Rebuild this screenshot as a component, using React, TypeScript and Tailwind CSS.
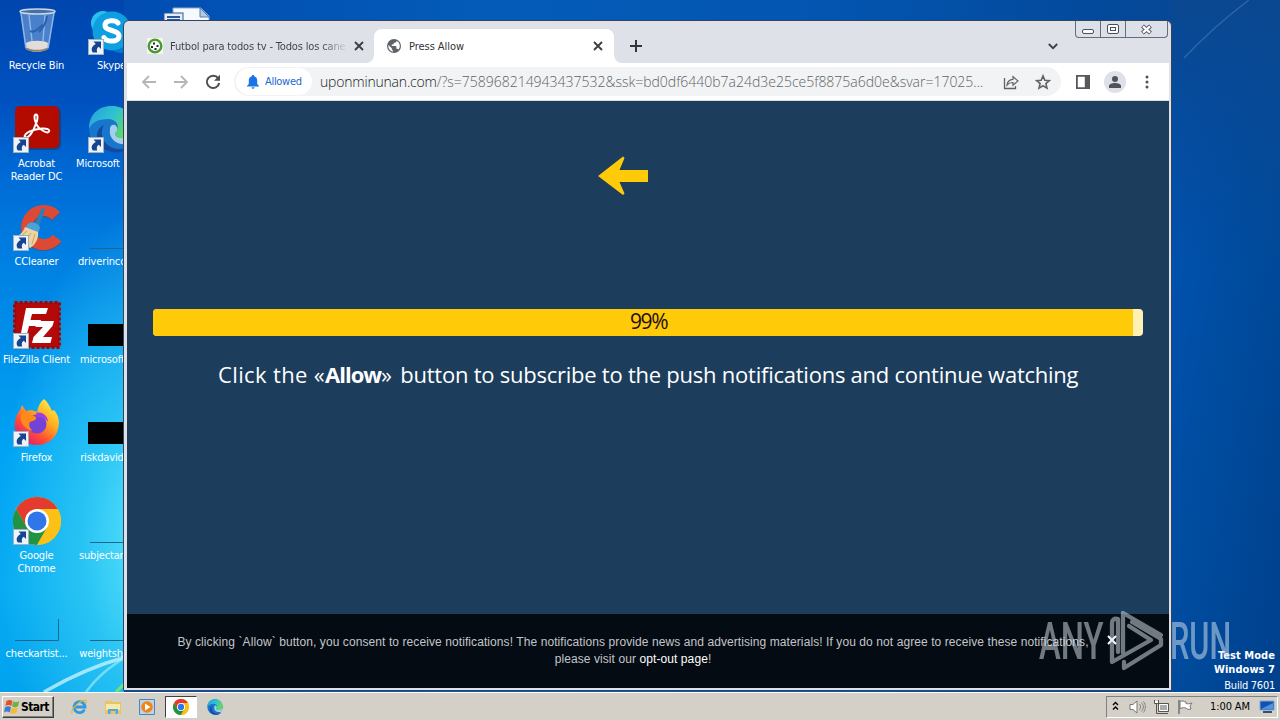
import React from "react";

const tahoma = "font-['DejaVu_Sans_Condensed','DejaVu_Sans',sans-serif]";
const trebuchet = "font-['Open_Sans','Noto_Sans',sans-serif]";

function Shortcut() {
  return (
    <svg className="absolute left-0 bottom-0" width="16" height="16" viewBox="0 0 16 16">
      <rect x="0.5" y="0.5" width="15" height="15" fill="#eef3f8" stroke="#9db0c4" />
      <path d="M5.500 2.500h7.500V10L10.800 7.800C8.700 9 8.400 10.800 9.200 13.500H4.800C2.500 10 4 7 7.800 5z" fill="#17448f" />
    </svg>
  );
}

function RecycleBin() {
  return (
    <svg width="48" height="48" viewBox="0 0 48 48">
      <path d="M7 4l5 37c1 5 22 5 24 0l6-37z" fill="#7ba7dc" fillOpacity="0.6" />
      <path d="M8 6l5 35M41 6l-6 35M16 8l3 26M32 8l-2 26" stroke="#c4dcf4" strokeOpacity="0.6" strokeWidth="1.4" />
      <path d="M17 24c5 3 9-4 13-6M34 9c-1 8-4 12-8 16" stroke="#2861ae" strokeWidth="2" fill="none" />
      <ellipse cx="24.500" cy="4.500" rx="17.500" ry="2.500" fill="#486fa6" stroke="#c9d7e6" strokeWidth="1.5" />
      <path d="M13 36c4-3 18-3 22 0l-.5 5c-3 5-18 5-21 0z" fill="#e2ddda" />
      <path d="M14 41.500c4 3 16 3 20 0" stroke="#94816f" strokeWidth="2" fill="none" />
    </svg>
  );
}

function SkypeIcon() {
  return (
    <svg width="48" height="48" viewBox="0 0 48 48">
      <circle cx="15" cy="16" r="12" fill="#29c0ee" />
      <circle cx="33" cy="33" r="13" fill="#0078d4" />
      <circle cx="24" cy="24" r="19.500" fill="#0d9fdf" />
      <path d="M30 16c-2-3-13-4-13 2.500 0 6 14 4 14 10.500 0 7-13 6-15 1.500" stroke="#fff" strokeWidth="5" fill="none" strokeLinecap="round" />
    </svg>
  );
}

function AcrobatIcon() {
  return (
    <svg width="48" height="48" viewBox="0 0 48 48">
      <rect x="3" y="2" width="45" height="43" rx="6" fill="#3a2330" opacity="0.5" />
      <rect x="2" y="1" width="44" height="42" rx="5" fill="#b30b00" />
      <path d="M12 32c-2-4 9-8 17-8.500 5-.3 8 1 7 3-2 3-11-3-13-8-2-5-2-9 0-9s2 5 0 9c-2 6-7 16-11 13.500z" fill="none" stroke="#fff" strokeWidth="2" />
    </svg>
  );
}

function EdgeIcon({ size }: { size: number }) {
  return (
    <svg width={size} height={size} viewBox="0 0 48 48">
      <defs>
        <linearGradient id="edgeTop" x1="0" y1="0" x2="1" y2="0.5">
          <stop offset="0" stopColor="#249fe0" />
          <stop offset="0.55" stopColor="#31c3cf" />
          <stop offset="1" stopColor="#63dc52" />
        </linearGradient>
      </defs>
      <circle cx="24" cy="24" r="23" fill="#1876cd" />
      <path d="M1 24C1 8 12 1 24 1s23 9 23 20c0 8-6 12-13 12-6 0-8-3-6-6 5-7-1-13-8-13C10 14 3 18 1 24z" fill="url(#edgeTop)" />
      <path d="M16 20c-6 9 1 24 15 24 5 0 9-2 12-5-5 9-14 9-19 8C9 46 3 26 16 20z" fill="#134a9e" />
      <path d="M28 27c-2 3 0 6 6 6 5 0 9-2 12-6-1 5-2 9-4 11-9 4-22-2-20-14 0-3 2-5 5-4 3 2 3 5 1 7z" fill="#d6edf8" opacity="0.75" />
    </svg>
  );
}

function CCleanerIcon() {
  return (
    <svg width="48" height="48" viewBox="0 0 48 48">
      <path d="M43 14A17 17 0 1 0 44 36" fill="none" stroke="#8e2f2b" strokeWidth="11" opacity="0.5" />
      <path d="M43 13A17 17 0 1 0 44 35" fill="none" stroke="#dc4a35" strokeWidth="11" />
      <path d="M29 5l3 1-6 18-5-2z" fill="#2a7fb8" />
      <path d="M15 21c3-3 11-1 12 4l-2 5-13-5z" fill="#4ba2d8" />
      <path d="M12 24l13 5c1 7-3 13-8 16L1 34c6-1 9-5 11-10z" fill="#edd3a0" />
      <path d="M14 28L6 35M18 30l-6 9M22 31l-3 10" stroke="#c8a467" />
    </svg>
  );
}

function FileZillaIcon() {
  return (
    <svg width="48" height="48" viewBox="0 0 48 48">
      <rect x="1.500" y="1.500" width="45" height="45" fill="#b00808" stroke="#9d0707" strokeWidth="3" strokeDasharray="3 2" />
      <rect x="3" y="3" width="42" height="42" fill="#b50909" />
      <path d="M13 7h22l-2 6H19l-1.500 6H28l-2 6H16l-3 12H7z" fill="#fff" />
      <path d="M24 20h17l-1.500 5L30 36h9l-1.500 6H19l1.500-6L30 26h-7.500z" fill="#fff" />
    </svg>
  );
}

function FirefoxIcon() {
  return (
    <svg width="48" height="48" viewBox="0 0 48 48">
      <defs>
        <linearGradient id="fox" x1="0.9" y1="0.05" x2="0.2" y2="0.95">
          <stop offset="0" stopColor="#fff24a" />
          <stop offset="0.4" stopColor="#ffa81f" />
          <stop offset="0.72" stopColor="#ff4a38" />
          <stop offset="1" stopColor="#e01873" />
        </linearGradient>
      </defs>
      <path d="M31 0c4 3 6 8 8 12l2-1c5 6 6 12 4 19-2 9-10 16-21 16S4 39 2 30c-1-7 1-14 5-19l2-5 4 6c3-1 7-1 11 1 1-5 3-10 7-13z" fill="url(#fox)" />
      <circle cx="24" cy="25" r="9.500" fill="#7542d8" />
      <path d="M8 15c5-3 10 1 15 3 1 3-3 4-6 5-2 3 0 7 3 9-8-1-14-9-12-17z" fill="#ff8a1c" />
      <path d="M23 14c6-2 12 3 12 9-3-4-6-5-11-5z" fill="#a23ee0" />
    </svg>
  );
}

function ChromeIcon({ size }: { size: number }) {
  return (
    <svg width={size} height={size} viewBox="0 0 48 48">
      <circle cx="24" cy="24" r="24" fill="#fbc116" />
      <path d="M3.200 12A24 24 0 0 1 44.800 12H24L13.600 30z" fill="#e33b2e" />
      <path d="M3.200 12A24 24 0 0 0 24 48L34.400 30H13.600z" fill="#229342" />
      <path d="M24 12h20.800A24 24 0 0 1 24 48L34.400 30z" fill="#fbc116" />
      <circle cx="24" cy="24" r="12" fill="#fff" />
      <circle cx="24" cy="24" r="9.500" fill="#2f76ea" />
    </svg>
  );
}

function Ghost({ corner = false }: { corner?: boolean }) {
  return (
    <svg width="48" height="48" viewBox="0 0 48 48">
      <path d={corner ? "M2 45.500H45.500V24" : "M2 45.500H46"} stroke="#1b6690" strokeWidth="1" fill="none" />
    </svg>
  );
}

function BlackThumb() {
  return <div className="mt-[23px] h-[22px] w-12 bg-black" />;
}

function DocIcon() {
  return (
    <svg width="48" height="48" viewBox="0 0 48 48">
      <path d="M10 1h28l8 8v38H10z" fill="#f6f9fd" stroke="#8fa9cc" />
      <path d="M37 1v9h9z" fill="#b4c9e4" stroke="#5a7cae" />
      <rect x="1" y="6" width="19" height="16" fill="#e4edf8" stroke="#2b589c" />
      <path d="M4 10h13M4 13h13" stroke="#2b589c" strokeWidth="2" />
    </svg>
  );
}

type Item = { icon: React.ReactNode; label: string; shortcut?: boolean };

const columns: Item[][] = [
  [
    { icon: <RecycleBin />, label: "Recycle Bin" },
    { icon: <AcrobatIcon />, label: "Acrobat\nReader DC", shortcut: true },
    { icon: <CCleanerIcon />, label: "CCleaner", shortcut: true },
    { icon: <FileZillaIcon />, label: "FileZilla Client", shortcut: true },
    { icon: <FirefoxIcon />, label: "Firefox", shortcut: true },
    { icon: <ChromeIcon size={48} />, label: "Google\nChrome", shortcut: true },
    { icon: <Ghost corner />, label: "checkartist..." },
  ],
  [
    { icon: <SkypeIcon />, label: "Skype", shortcut: true },
    { icon: <EdgeIcon size={48} />, label: "Microsoft Edge", shortcut: true },
    { icon: <Ghost />, label: "driverincorp..." },
    { icon: <BlackThumb />, label: "microsoftm..." },
    { icon: <BlackThumb />, label: "riskdavid.rtf.." },
    { icon: <Ghost />, label: "subjectarea..." },
    { icon: <Ghost />, label: "weightshou..." },
  ],
  [{ icon: <DocIcon />, label: "" }],
];

function DesktopIcons() {
  return (
    <div className="flex w-[226px] pt-[7px]">
      {columns.map((col, i) => (
        <div key={i} className="flex w-[75px] shrink-0 flex-col items-center first:-ml-px">
          {col.map((it, j) => (
            <div key={j} className="flex h-[98px] w-[75px] flex-col items-center">
              <div className="relative ml-px h-12 w-12 shrink-0">
                {it.icon}
                {it.shortcut && <Shortcut />}
              </div>
              <div className="mt-1 text-center text-[11px] leading-[13px] tracking-[-0.15px] whitespace-pre text-white">{it.label}</div>
            </div>
          ))}
        </div>
      ))}
    </div>
  );
}

function CloseX() {
  return (
    <svg width="10" height="10" viewBox="0 0 10 10" className="shrink-0">
      <path d="M1 1l8 8M9 1L1 9" stroke="#3c4043" strokeWidth="1.9" />
    </svg>
  );
}

function TabStrip() {
  return (
    <div className="relative flex h-[42px] shrink-0 items-end">
      <div className="flex h-[34px] w-[247px] items-center pl-5">
        <svg width="16" height="16" viewBox="0 0 16 16" className="shrink-0">
          <rect width="16" height="16" rx="1" fill="#f5faef" />
          <circle cx="8" cy="8" r="6.300" fill="#fff" stroke="#4c9a35" strokeWidth="2.400" />
          <path d="M6 4.500h2v2H6zM9.500 7h2v2h-2zM4 8h2v2H4zM7.500 10h2v2h-2z" fill="#222" />
        </svg>
        <div className="mt-0.5 ml-[7px] w-[178px] bg-linear-to-r from-[#3c4043] from-85% to-transparent bg-clip-text text-[11px] tracking-[-0.15px] whitespace-nowrap text-transparent">
          Futbol para todos tv - Todos los cane
        </div>
        <div className="ml-[6px]"><CloseX /></div>
      </div>
      <div className="relative flex h-[34px] w-[240px] items-center rounded-t-lg bg-white pr-[11px] pl-[13px]">
        <svg className="absolute -left-2 bottom-0" width="8" height="8" viewBox="0 0 8 8"><path d="M8 0v8H0a8 8 0 0 0 8-8z" fill="#fff" /></svg>
        <svg className="absolute -right-2 bottom-0" width="8" height="8" viewBox="0 0 8 8"><path d="M0 0v8h8a8 8 0 0 1-8-8z" fill="#fff" /></svg>
        <svg width="14" height="14" viewBox="0 0 14 14" className="shrink-0">
          <circle cx="7" cy="7" r="7" fill="#5f6368" />
          <path d="M1.300 6l3.500 3.200v1.300l1.200 1.200v1.100C3 12 1 9.500 1.300 6zM9.500 1.800v.5c0 .8-.6 1.400-1.400 1.400H6.700v1.200c0 .4-.3.700-.7.700H4.700V7h4c.4 0 .7.300.7.700v2h.7c.6 0 1.100.4 1.300.9a5.600 5.600 0 0 0-1.900-8.800z" fill="#fff" />
        </svg>
        <div className="mt-0.5 ml-2 grow text-[11px] tracking-[-0.05px] text-[#303236]">Press Allow</div>
        <CloseX />
      </div>
      <svg width="12" height="12" viewBox="0 0 12 12" className="mb-[11px] ml-4"><path d="M6 0v12M0 6h12" stroke="#33363a" strokeWidth="2" /></svg>
      <svg width="10" height="7" viewBox="0 0 10 7" className="mr-[111px] mb-[13px] ml-auto"><path d="M.8 1L5 5.200 9.200 1" stroke="#3c4043" strokeWidth="1.800" fill="none" /></svg>
      <div className="absolute top-0 right-px flex h-[17px] w-[93px] divide-x divide-[#676d78] rounded-b border border-t-0 border-[#676d78] bg-[#dce0e8]">
        <div className="flex w-[25px] items-center justify-center pt-1"><div className="h-[5px] w-3 rounded-xs border border-[#4a505a] bg-white" /></div>
        <div className="flex w-[25px] items-center justify-center">
          <div className="flex h-[10px] w-3 items-center justify-center rounded-xs border border-[#4a505a] bg-white"><div className="h-1 w-[6px] border border-[#4a505a]" /></div>
        </div>
        <div className="flex grow items-center justify-center">
          <svg width="13" height="11" viewBox="0 0 13 11"><path d="M2.500 2l8 7M10.500 2l-8 7" stroke="#4a505a" strokeWidth="4.200" /><path d="M3 2.400l7 6.200M10 2.400L3 8.600" stroke="#fff" strokeWidth="2.300" /></svg>
        </div>
      </div>
    </div>
  );
}

function Toolbar() {
  return (
    <div className="flex h-[38px] shrink-0 items-center border-b border-[#d5dce3] bg-white">
      <svg width="16" height="14" viewBox="0 0 16 14" className="ml-[14px]"><path d="M15 7H2M8 1L2 7l6 6" stroke="#b4b6b9" strokeWidth="1.800" fill="none" /></svg>
      <svg width="16" height="14" viewBox="0 0 16 14" className="ml-4"><path d="M1 7h13M8 1l6 6-6 6" stroke="#b4b6b9" strokeWidth="1.800" fill="none" /></svg>
      <svg width="16" height="16" viewBox="0 0 16 16" className="ml-4"><path d="M13.200 4.300A6.200 6.200 0 1 0 14.200 9" stroke="#4b4e52" strokeWidth="2" fill="none" /><path d="M15 .8v6H9z" fill="#4b4e52" /></svg>
      <div className="ml-[13px] flex h-[29px] w-[827px] items-center rounded-full bg-[#f1f3f4]">
        <div className="ml-0.5 flex h-[27px] w-[76px] items-center rounded-full bg-white pl-[11px]">
          <svg width="12" height="14" viewBox="0 0 12 14"><path d="M6 0c.7 0 1.200.5 1.200 1.200C9.300 1.800 10.200 3.400 10.200 5.500V9L12 11v.6H0V11l1.800-2V5.500c0-2.100.9-3.700 3-4.300C4.800.5 5.300 0 6 0zM4.500 12.200h3a1.500 1.500 0 0 1-3 0z" fill="#1a73e8" /></svg>
          <span className="mt-px ml-[6px] text-[11px] tracking-[-0.3px] text-[#1a67d2]">Allowed</span>
        </div>
        <div className="ml-2 w-[672px] font-['Open_Sans','Noto_Sans',sans-serif] text-[14px] font-light tracking-[-0.01px] whitespace-nowrap text-[#5f6368]">
          <span className="tracking-[-0.2px] text-[#202124]">uponminunan.com</span>/?s=758968214943437532&amp;ssk=bd0df6440b7a24d3e25ce5f8875a6d0e&amp;svar=17025...
        </div>
        <svg width="16" height="16" viewBox="0 0 16 16" className="ml-[11px] shrink-0"><path d="M1.500 4v10.500h11V12" stroke="#5f6368" strokeWidth="1.300" fill="none" /><path d="M4 11c.5-3.800 2.500-5.500 6-5.700V2.500L15 7l-5 4.300V8.500C7.500 8.400 5.500 9.200 4 11z" stroke="#5f6368" strokeWidth="1.200" fill="none" /></svg>
        <svg width="16" height="16" viewBox="0 0 16 16" className="ml-4 shrink-0"><path d="M8 1.900l1.800 4.300 4.600.4-3.500 3 1.100 4.500-4-2.400-4 2.400 1.100-4.500-3.500-3 4.600-.4z" stroke="#5f6368" strokeWidth="1.600" fill="none" /></svg>
      </div>
      <svg width="14" height="14" viewBox="0 0 14 14" className="ml-[15px]"><path d="M0 0h14v14H0zM1.800 1.800v10.400h7V1.800z" fill="#55585c" fillRule="evenodd" /></svg>
      <div className="ml-[14px] flex h-[22px] w-[22px] items-center justify-center rounded-full bg-[#dee1e8]">
        <svg width="12" height="12" viewBox="0 0 12 12"><circle cx="6" cy="3" r="3" fill="#50545a" /><path d="M0 12V10c0-4 12-4 12 0v2z" fill="#50545a" /></svg>
      </div>
      <svg width="4" height="14" viewBox="0 0 4 14" className="ml-[19px]"><circle cx="2" cy="2" r="1.500" fill="#50545a" /><circle cx="2" cy="7" r="1.500" fill="#50545a" /><circle cx="2" cy="12" r="1.500" fill="#50545a" /></svg>
    </div>
  );
}

function Page() {
  return (
    <div className="flex grow flex-col bg-[#1d3d5c]">
      <svg width="50" height="39" viewBox="0 0 50 39" className="mt-[55px] ml-[471px] shrink-0">
        <path d="M0 20L25 .5l1.500 1.500L21.500 14H50v12H21.500l5 11.500L25 39z" fill="#ffca08" />
      </svg>
      <div className={"mx-[26px] mt-[114px] flex h-[27px] rounded bg-[#fff0b4] " + trebuchet}>
        <div className="flex w-[99%] items-center rounded-l bg-[#ffca08]">
          <span className="mb-0.5 ml-[477px] text-[21px] leading-none tracking-[-1.4px] text-[#1d0d10]">99%</span>
        </div>
      </div>
      <div className={"mt-[21px] ml-[91px] text-[22px] leading-[34px] tracking-[-0.24px] whitespace-nowrap text-white " + trebuchet}>
        <span className="tracking-[0.36px]">Click the «</span>
        <b className="tracking-[-1px]">Allow</b>
        <span className="mr-[3px]">»</span> button to subscribe to the push notifications and continue watching
      </div>
      <div className="mt-auto flex h-[74px] bg-[#050b12] font-['Liberation_Sans',Arial,sans-serif] text-[12px] leading-[17px] tracking-[0.085px] text-[#c3c6c9]">
        <div className="mt-5 ml-[46px] w-[920px] text-center whitespace-nowrap">
          By clicking `Allow` button, you consent to receive notifications! The notifications provide news and advertising materials! If you do not agree to receive these notifications,
          <br />
          please visit our <span className="text-white">opt-out page</span>!
        </div>
        <svg width="10" height="10" viewBox="0 0 10 10" className="mt-[21px] ml-[14px]"><path d="M1 1l8 8M9 1L1 9" stroke="#fff" strokeWidth="2" /></svg>
      </div>
    </div>
  );
}

function Watermark() {
  return (
    <div className="absolute top-[608px] left-[1038px] h-[66px] w-[196px] font-['Roboto',sans-serif] text-[52px] leading-[66px] font-medium text-[#dce6f0] opacity-50">
      <span className="absolute top-px left-px origin-left scale-x-[0.63]">ANY</span>
      <svg className="absolute top-0 left-[70px]" width="60" height="66" viewBox="0 0 60 66" fill="none" stroke="currentColor" strokeWidth="4.300" strokeLinejoin="round" strokeLinecap="round">
        <path d="M10 44V11c-4-1-6 1-6 4v39l39-22L21 18" />
        <path d="M15 45V5l38 22" />
        <path d="M24 14l29 17v6L16 60v-6" />
      </svg>
      <span className="absolute top-px left-[132px] origin-left scale-x-[0.59]">RUN</span>
    </div>
  );
}

function Taskbar() {
  return (
    <div className="flex h-7 items-center border-t border-white bg-[#d4d0c8] text-[11px] text-black">
      <div className="ml-0.5 flex h-[22px] w-[52px] items-center border border-t-white border-r-[#404040] border-b-[#404040] border-l-white pl-px shadow-[inset_-1px_-1px_0_#808080]">
        <svg width="16" height="16" viewBox="0 0 16 16" className="shrink-0">
          <path d="M2.500 2c2-1.500 4-1.500 6 0L7.300 7c-2-1.300-4-1.200-6 0z" fill="#e4512b" />
          <path d="M9.300 2.300c2 1.300 4 1.200 6-.2L14 7.300c-2 1.500-4 1.500-6 0z" fill="#71b043" />
          <path d="M1 8.200c2-1.300 4-1.300 6 0L5.800 13.500c-2-1.200-4-1.200-5.800 0z" fill="#3e7bd0" />
          <path d="M7.800 8.500c2 1.400 4 1.300 6 0l-1.200 5c-2 1.500-4 1.500-6 .2z" fill="#f6bb2d" />
        </svg>
        <b className="ml-px text-[12px] tracking-[-0.55px]">Start</b>
      </div>
      <svg width="16" height="16" viewBox="0 0 16 16" className="ml-[17px]"><path d="M13.500 10.500A5.500 5.500 0 1 1 14 8H4" stroke="#2f9ade" strokeWidth="2.800" fill="none" /><path d="M1 14.500C-1 10 12-1 15 1.500c1 1-.5 3-1 3.500" stroke="#e8b53c" strokeWidth="1.300" fill="none" /></svg>
      <svg width="16" height="16" viewBox="0 0 16 16" className="ml-[18px]"><path d="M0 2h7l1 1h8v12H0z" fill="#e6c565" /><path d="M1 5h14v6H1z" fill="#f8e9a8" /><path d="M3 15v-5h10v5h-2.500v-3h-5v3z" fill="#52a8e0" /></svg>
      <svg width="16" height="16" viewBox="0 0 16 16" className="ml-[18px]"><path d="M.5.5h15v15H.5z" fill="#bcd3ea" stroke="#4588c0" /><circle cx="8" cy="8" r="5.800" fill="#f08515" /><path d="M6 4.500L11.500 8 6 11.500z" fill="#fff" /></svg>
      <div className="ml-[10px] flex h-[22px] w-8 items-center justify-center border border-t-[#404040] border-r-white border-b-white border-l-[#404040] bg-white"><ChromeIcon size={16} /></div>
      <div className="ml-[10px]"><EdgeIcon size={16} /></div>
      <div className="mr-0.5 ml-auto flex h-[22px] w-[172px] items-center border border-t-[#808080] border-r-white border-b-white border-l-[#808080]">
        <svg width="7" height="10" viewBox="0 0 7 10" className="mb-0.5 ml-[5px]"><path d="M1 4l2.500-2.500L6 4M1 8.500L3.500 6 6 8.500" stroke="#000" strokeWidth="1.400" fill="none" /></svg>
        <svg width="17" height="16" viewBox="0 0 17 16" className="ml-[10px]"><path d="M1 5.500h3L8 2v12l-4-3.500H1z" fill="#fff" stroke="#777" /><path d="M10.500 5c1.500 2 1.500 4 0 6M12.500 3.500c2.500 3 2.500 6 0 9M14.500 2.500c2.500 3.500 2.500 7.500 0 11" stroke="#858585" fill="none" /></svg>
        <svg width="17" height="16" viewBox="0 0 17 16" className="ml-[7px]"><path d="M5.500 4.500h10v8h-10z" fill="#aaa" stroke="#555" /><path d="M6.500 5.500h8v6h-8z" stroke="#fff" fill="none" /><path d="M7 14.500h8" stroke="#555" /><path d="M1.500 1v3.500h4V1M3.500 5v9.500H7" stroke="#555" fill="none" /><path d="M2 3h3" stroke="#fff" strokeWidth="2" /></svg>
        <svg width="17" height="16" viewBox="0 0 17 16" className="ml-[7px]"><path d="M2 1v14" stroke="#777" strokeWidth="1.600" /><path d="M3 2.500c3-1.500 4 .5 6 .5v1.500c2 .5 3 .5 6-.5l-2 3 1 3c-3 1-4 0-5-1-2-.5-3-.5-6 .5z" fill="#fff" stroke="#777" /></svg>
        <span className="mt-0.5 ml-4 tracking-[-0.1px] whitespace-nowrap">1:00 AM</span>
        <svg width="16" height="14" viewBox="0 0 16 14" className="mr-0.5 ml-auto"><path d="M1 1h14v9H1z" fill="#164fae" stroke="#7da6db" /><path d="M2 9l12-6v6z" fill="#4d93e2" /><path d="M4 12h9" stroke="#394d66" strokeWidth="2" /></svg>
      </div>
    </div>
  );
}

function Wallpaper() {
  return (
    <div className="absolute inset-0 bg-[linear-gradient(90deg,#0048b0_0%,#045cb8_40%,#0355b0_65%,#034a9c_85%,#0a4590_100%)]">
      <div className="absolute top-0 left-0 h-full w-[124px] bg-[linear-gradient(180deg,#0045ae_0%,#0052c0_15%,#006cd6_26%,#0080e2_38%,#0094ec_52%,#00a4f4_66%,#08acf2_85%,#00a2ee_100%)]" />
      <div className="absolute top-0 left-0 h-full w-[124px] bg-[radial-gradient(ellipse_150px_330px_at_150px_540px,#5ae4fb_0%,#38cff5b0_45%,transparent_100%)]" />
      <div className="absolute top-0 left-[1171px] h-full w-[109px] bg-[linear-gradient(100deg,#0054b8_0%,#004c9f_50%,#00408c_100%)]" />
      <div className="absolute top-0 left-[1171px] h-full w-[109px] bg-[linear-gradient(180deg,#0649930_0%,#0c468900_40%,#0060d000_41%,#0060d0a0_100%)]" />
      <div className="absolute top-0 left-[1171px] h-[270px] w-[109px] bg-linear-to-b from-[#0a4790] to-transparent" />
      <svg className="absolute inset-0" width="1280" height="692" fill="none">
        <path d="M1184 58C1205 36 1225 18 1249 0" stroke="#6c9bd0" strokeOpacity="0.35" strokeWidth="1.500" />
        <path d="M44 692C75 674 100 664 126 657" stroke="#bff2ff" strokeOpacity="0.8" strokeWidth="3.500" />
        <path d="M86 692C97 677 108 668 126 657" stroke="#a5f0fa" strokeOpacity="0.6" strokeWidth="2.500" />
        <path d="M116 692l10-10" stroke="#73e472" strokeWidth="3" />
      </svg>
    </div>
  );
}

export default function App() {
  return (
    <div className={"relative flex h-[720px] w-[1280px] flex-col overflow-hidden " + tahoma}>
      <div className="relative h-[692px] shrink-0 overflow-hidden bg-[#0050b0]">
        <Wallpaper />
        <div className="relative"><DesktopIcons /></div>
        <div className="absolute right-[5px] -bottom-0.5 text-right text-[11px] leading-[14px] text-white">
          <div className="font-bold tracking-[0.05px]">Test Mode</div>
          <div className="font-bold tracking-[0.05px]">Windows 7</div>
          <div className="leading-[17px] tracking-[-0.25px]">Build 7601</div>
        </div>
        <div className="absolute top-5 left-[123px] flex h-[671px] w-[1049px] flex-col rounded-t-md border border-[#34435e] bg-[#dee1e8] pr-0.5 pb-0.5 pl-[3px]">
          <TabStrip />
          <Toolbar />
          <Page />
        </div>
      </div>
      <Taskbar />
      <Watermark />
    </div>
  );
}
